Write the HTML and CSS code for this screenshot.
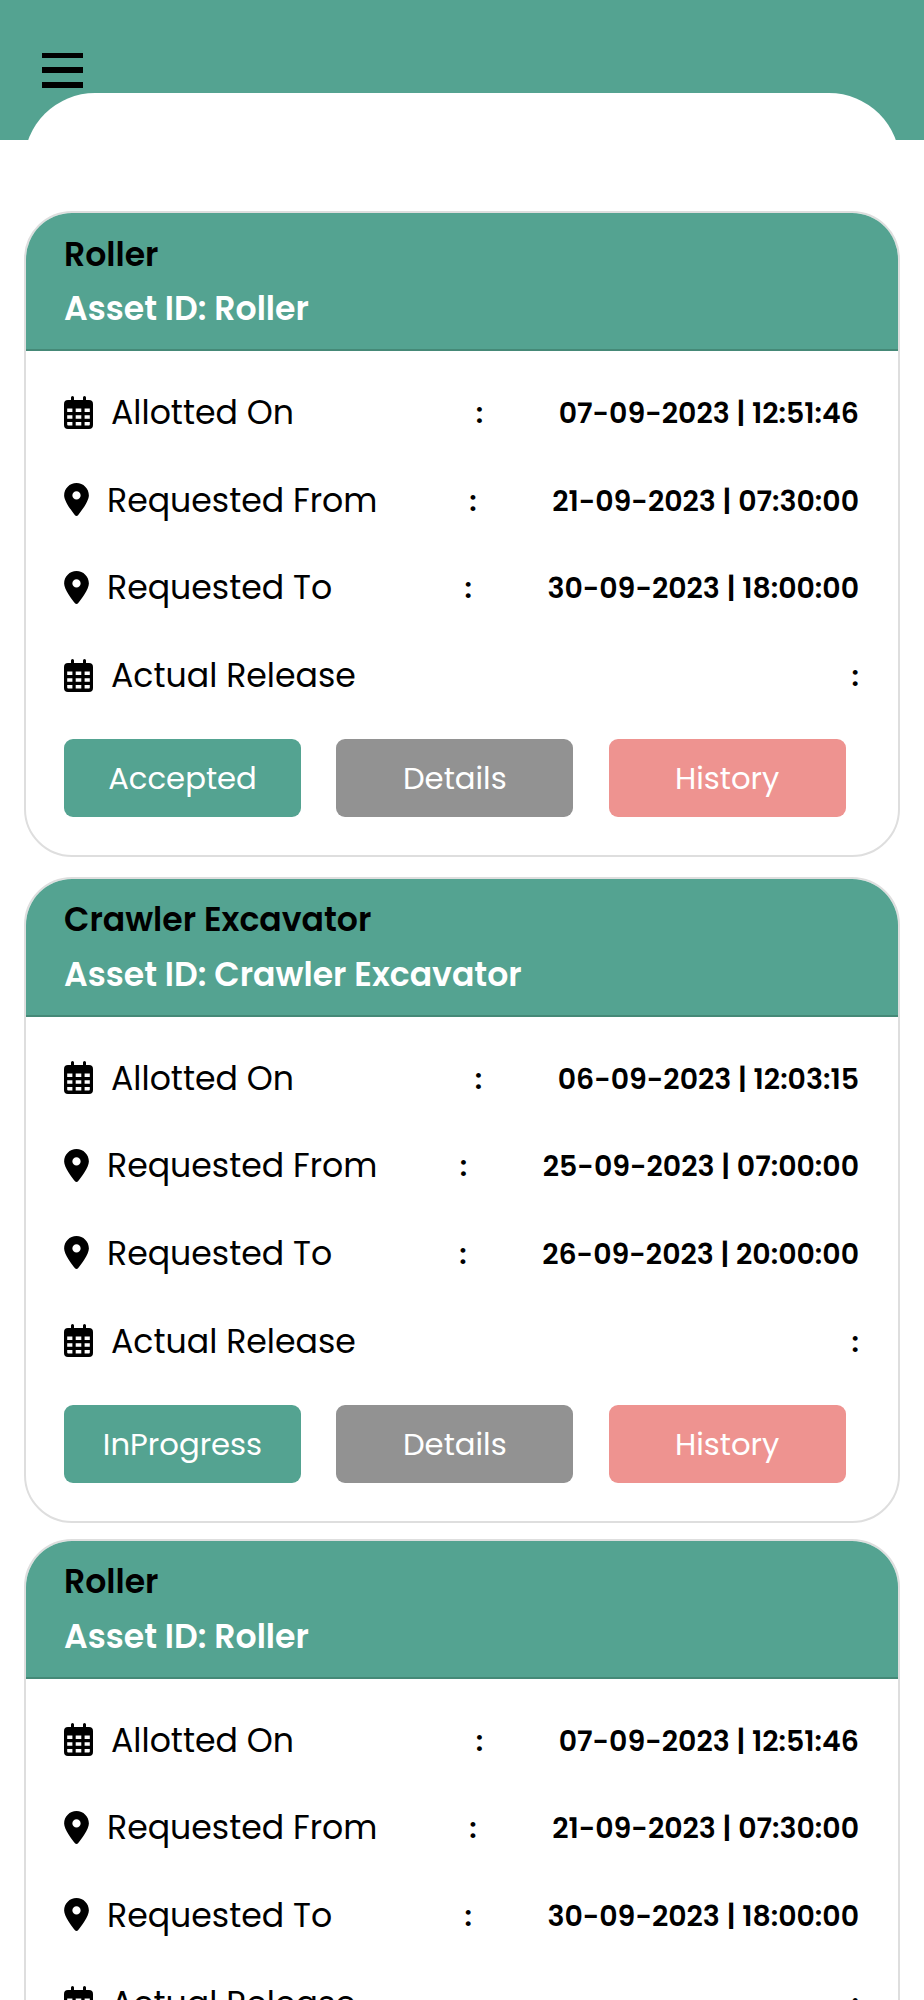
FILE: index.html
```html
<!DOCTYPE html>
<html lang="en">
<head>
    <meta charset="UTF-8">
    <meta name="viewport" content="width=device-width, initial-scale=1.0">
    <title>Assets</title>
    <link rel="stylesheet" href="styles.css">
</head>
<body>
    <!-- icons used in the cards -->
    <svg class="sprite" width="0" height="0">
        <symbol id="calendar" viewBox="0 0 29 33">
            <path fill-rule="evenodd" d="M8.500 0a1.500 1.500 0 0 1 1.500 1.500V4h9V1.500a1.500 1.500 0 0 1 3 0V4h3a4 4 0 0 1 4 4v21a4 4 0 0 1-4 4H4a4 4 0 0 1-4-4V8a4 4 0 0 1 4-4h3V1.500A1.500 1.500 0 0 1 8.500 0zM3.200 12.400v3.600h5.200v-3.600zM11.700 12.400v3.600h5.600v-3.600zM20.600 12.400v3.600h5.200v-3.600zM3.200 19.200v3.600h5.200v-3.600zM11.700 19.200v3.600h5.600v-3.600zM20.600 19.200v3.600h5.200v-3.600zM3.200 26v2.600a1 1 0 0 0 1 1h4.200V26zM11.700 26v3.600h5.600V26zM20.600 26v3.600h4.200a1 1 0 0 0 1-1V26z"/>
        </symbol>
        <symbol id="pin" viewBox="0 0 384 512">
            <path fill-rule="evenodd" d="M215.700 499.200C267 435 384 279.400 384 192C384 86 298 0 192 0S0 86 0 192c0 87.400 117 243 168.300 307.200c12.300 15.300 35.100 15.300 47.400 0zM192 128a64 64 0 1 1 0 128 64 64 0 1 1 0-128z"/>
        </symbol>
    </svg>

    <header class="topbar">
        <div class="menu">
            <span></span>
            <span></span>
            <span></span>
        </div>
    </header>

    <main class="sheet">
        <div class="card">
            <div class="card-header">
                <div class="title">Roller</div>
                <div class="asset">Asset ID: Roller</div>
            </div>
            <div class="card-body">
                <div class="row">
                    <div class="label"><svg class="cal"><use href="#calendar"/></svg>Allotted On</div>
                    <div class="value"><span>:</span><span>07-09-2023 | 12:51:46</span></div>
                </div>
                <div class="row">
                    <div class="label"><svg class="pin"><use href="#pin"/></svg>Requested From</div>
                    <div class="value"><span>:</span><span>21-09-2023 | 07:30:00</span></div>
                </div>
                <div class="row">
                    <div class="label"><svg class="pin"><use href="#pin"/></svg>Requested To</div>
                    <div class="value"><span>:</span><span>30-09-2023 | 18:00:00</span></div>
                </div>
                <div class="row">
                    <div class="label"><svg class="cal"><use href="#calendar"/></svg>Actual Release</div>
                    <div class="value"><span>:</span></div>
                </div>
                <div class="buttons">
                    <button class="btn status">Accepted</button>
                    <button class="btn details">Details</button>
                    <button class="btn history">History</button>
                </div>
            </div>
        </div>

        <div class="card">
            <div class="card-header">
                <div class="title">Crawler Excavator</div>
                <div class="asset">Asset ID: Crawler Excavator</div>
            </div>
            <div class="card-body">
                <div class="row">
                    <div class="label"><svg class="cal"><use href="#calendar"/></svg>Allotted On</div>
                    <div class="value"><span>:</span><span>06-09-2023 | 12:03:15</span></div>
                </div>
                <div class="row">
                    <div class="label"><svg class="pin"><use href="#pin"/></svg>Requested From</div>
                    <div class="value"><span>:</span><span>25-09-2023 | 07:00:00</span></div>
                </div>
                <div class="row">
                    <div class="label"><svg class="pin"><use href="#pin"/></svg>Requested To</div>
                    <div class="value"><span>:</span><span>26-09-2023 | 20:00:00</span></div>
                </div>
                <div class="row">
                    <div class="label"><svg class="cal"><use href="#calendar"/></svg>Actual Release</div>
                    <div class="value"><span>:</span></div>
                </div>
                <div class="buttons">
                    <button class="btn status">InProgress</button>
                    <button class="btn details">Details</button>
                    <button class="btn history">History</button>
                </div>
            </div>
        </div>

        <div class="card">
            <div class="card-header">
                <div class="title">Roller</div>
                <div class="asset">Asset ID: Roller</div>
            </div>
            <div class="card-body">
                <div class="row">
                    <div class="label"><svg class="cal"><use href="#calendar"/></svg>Allotted On</div>
                    <div class="value"><span>:</span><span>07-09-2023 | 12:51:46</span></div>
                </div>
                <div class="row">
                    <div class="label"><svg class="pin"><use href="#pin"/></svg>Requested From</div>
                    <div class="value"><span>:</span><span>21-09-2023 | 07:30:00</span></div>
                </div>
                <div class="row">
                    <div class="label"><svg class="pin"><use href="#pin"/></svg>Requested To</div>
                    <div class="value"><span>:</span><span>30-09-2023 | 18:00:00</span></div>
                </div>
                <div class="row">
                    <div class="label"><svg class="cal"><use href="#calendar"/></svg>Actual Release</div>
                    <div class="value"><span>:</span></div>
                </div>
            </div>
        </div>
    </main>
</body>
</html>
```
FILE: styles.css
```css
* {
    box-sizing: border-box;
}
body {
    margin: 0;
    height: 2000px;
    overflow: hidden;
    background-color: #fff;
    color: #000;
    font-family: 'Poppins', 'Inter', sans-serif;
}
.sprite {
    display: block;
}
.topbar {
    height: 140px;
    padding: 52.5px 42px 0;
    background-color: #54a391;
}
.menu {
    display: flex;
    flex-direction: column;
    gap: 9px;
    width: 41px;
}
.menu span {
    height: 5.8px;
    background-color: #000;
}
/* white sheet slides up over the green bar */
.sheet {
    margin: -47.5px 24px 0;
    padding-top: 118.5px;
    background-color: #fff;
    border-radius: 71px 71px 0 0;
}
.card {
    height: 646px;
    margin-bottom: 19.5px;
    border: 2px solid #dedede;
    border-radius: 48px;
    overflow: hidden;
}
.card:nth-child(2) {
    margin-bottom: 16px;
}
.card-header {
    height: 138px;
    padding: 14.5px 38px 0;
    background-color: #54a391;
    border-bottom: 2px solid #458977;
    font-size: 33.1px;
    font-weight: 600;
    line-height: 54.5px;
}
.asset {
    color: #fff;
}
.card-body {
    padding: 18.5px 39px 0 38px;
}
.row {
    display: flex;
    justify-content: space-between;
    align-items: center;
    height: 87.6px;
}
.label {
    display: flex;
    align-items: center;
    font-size: 33.15px;
}
.label svg {
    height: 33px;
    margin-bottom: 2px;
    fill: #000;
}
.cal {
    width: 29px;
    margin-right: 18px;
}
.pin {
    width: 25px;
    margin-right: 18px;
}
.value {
    display: flex;
    gap: 75.5px;
    padding-top: 1px;
    font-size: 28.4px;
    font-weight: 600;
}
.buttons {
    display: flex;
    gap: 35.3px;
    margin-top: 19.3px;
}
.btn {
    width: 237px;
    height: 78px;
    padding: 2px 0 0;
    border: none;
    border-radius: 9px;
    color: #fff;
    font-family: inherit;
    font-size: 30.7px;
}
.status {
    background-color: #54a391;
}
.details {
    background-color: #929292;
}
.history {
    background-color: #ee9390;
}
```
